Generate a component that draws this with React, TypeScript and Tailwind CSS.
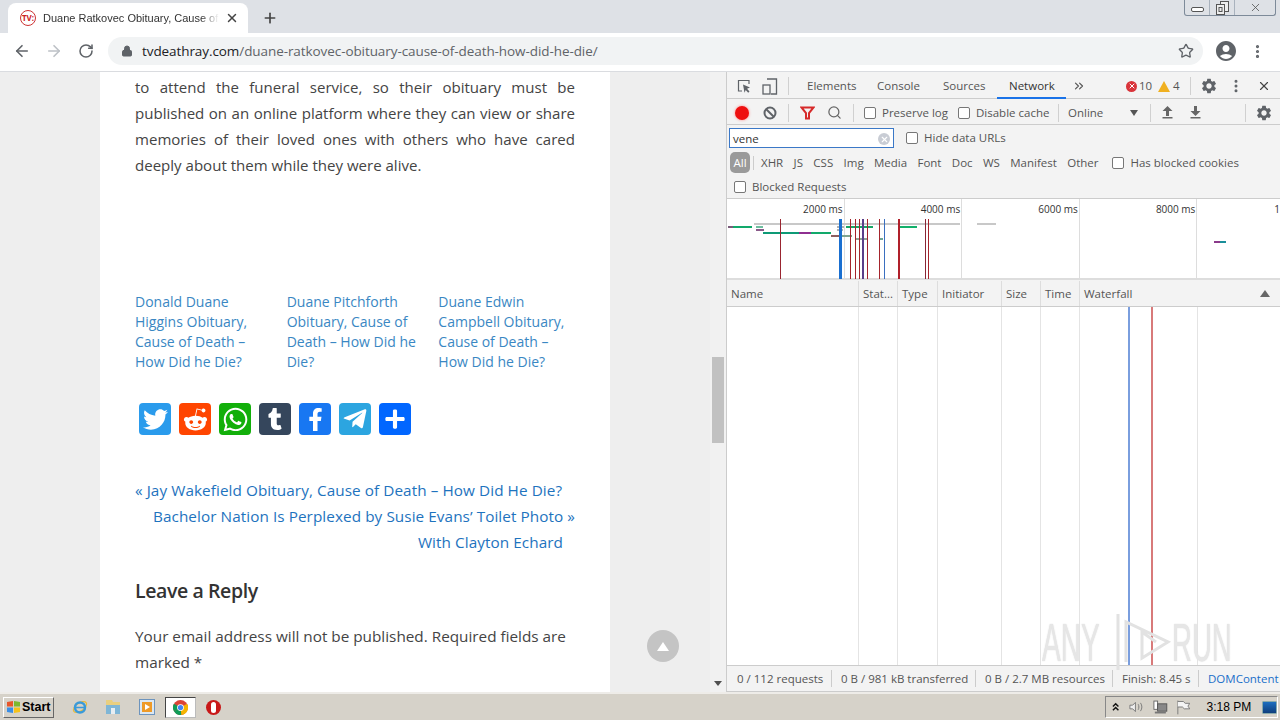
import { ArrowLeft, ArrowRight, RotateCw, Lock, Star, MoreVertical, X, Plus, Search, ChevronsRight } from "lucide-react";
import { FaTwitter, FaRedditAlien, FaWhatsapp, FaTumblr, FaFacebookF, FaTelegramPlane, FaPlus } from "react-icons/fa";
import { MdAccountCircle, MdSettings } from "react-icons/md";

const relatedLinks = [
  ["Donald Duane", "Higgins Obituary,", "Cause of Death –", "How Did he Die?"],
  ["Duane Pitchforth", "Obituary, Cause of", "Death – How Did he", "Die?"],
  ["Duane Edwin", "Campbell Obituary,", "Cause of Death –", "How Did he Die?"],
];

const shareButtons = [
  { bg: "bg-[#2a9bec]", icon: <FaTwitter size={25} /> },
  { bg: "bg-[#ff4500]", icon: <FaRedditAlien size={25} /> },
  { bg: "bg-[#12af0a]", icon: <FaWhatsapp size={27} /> },
  { bg: "bg-[#35465c]", icon: <FaTumblr size={22} /> },
  { bg: "bg-[#1877f2]", icon: <FaFacebookF size={23} /> },
  { bg: "bg-[#2ca5e0]", icon: <FaTelegramPlane size={26} /> },
  { bg: "bg-[#0166ff]", icon: <FaPlus size={22} /> },
];

const filterTypes = ["XHR", "JS", "CSS", "Img", "Media", "Font", "Doc", "WS", "Manifest", "Other"];

const columns = [
  { label: "Name", w: "w-[132px]" },
  { label: "Stat...", w: "w-[39px]" },
  { label: "Type", w: "w-[40px]" },
  { label: "Initiator", w: "w-[64px]" },
  { label: "Size", w: "w-[39px]" },
  { label: "Time", w: "w-[39px]" },
];

const overviewBars = [
  { x1: 754, x2: 960, y: 224, c: "#c8c8c8" },
  { x1: 977, x2: 996, y: 224, c: "#c8c8c8" },
  { x1: 728, x2: 733, y: 227, c: "#7a5a7a" },
  { x1: 733, x2: 752, y: 227, c: "#12a96b" },
  { x1: 756, x2: 763, y: 227, c: "#6fbfa0" },
  { x1: 756, x2: 764, y: 230, c: "#8a5a8a" },
  { x1: 763, x2: 799, y: 233, c: "#0e9a76" },
  { x1: 799, x2: 811, y: 233, c: "#8e2f90" },
  { x1: 811, x2: 831, y: 233, c: "#12a96b" },
  { x1: 831, x2: 839, y: 236, c: "#8d5f5f" },
  { x1: 839, x2: 852, y: 236, c: "#7fa58f" },
  { x1: 837, x2: 844, y: 227, c: "#b0b0b0" },
  { x1: 837, x2: 843, y: 230, c: "#b0b0b0" },
  { x1: 846, x2: 873, y: 227, c: "#16a765" },
  { x1: 855, x2: 867, y: 239, c: "#8fa596" },
  { x1: 880, x2: 883, y: 239, c: "#6fa596" },
  { x1: 900, x2: 917, y: 227, c: "#12b06a" },
  { x1: 1214, x2: 1220, y: 242, c: "#8a3a8a" },
  { x1: 1220, x2: 1226, y: 242, c: "#1a8f9a" },
];

const overviewLines = [
  { x: 780, c: "#9a2530", w: 1 },
  { x: 839, c: "#1a6fd0", w: 3 },
  { x: 850, c: "#a5242c", w: 1 },
  { x: 855, c: "#a5242c", w: 1 },
  { x: 859, c: "#a5242c", w: 1 },
  { x: 862, c: "#5a3f8a", w: 2 },
  { x: 867, c: "#a5242c", w: 1 },
  { x: 879, c: "#a5242c", w: 1 },
  { x: 884, c: "#3a6fc0", w: 1 },
  { x: 898, c: "#b0202a", w: 2 },
  { x: 925, c: "#8a2535", w: 1 },
  { x: 928, c: "#a5242c", w: 1 },
];

const Checkbox = () => (
  <span className="block w-[12px] h-[12px] shrink-0 rounded-[2px] border border-[#777] bg-white" />
);

const Divider = () => <span className="block w-px h-[18px] bg-[#d0d0d0] shrink-0" />;

const InspectIcon = () => (
  <svg width="16" height="16" viewBox="0 0 16 16" fill="none">
    <path d="M6 13H2.5V2.5H13V6" stroke="#5f6368" strokeWidth="1.2" />
    <path d="M7 6.5l7 3-3 1.2 2.5 2.8-1.3 1.2-2.5-2.8-1.2 2.8z" fill="#5f6368" />
  </svg>
);

const DeviceIcon = () => (
  <svg width="16" height="17" viewBox="0 0 16 17" fill="none">
    <path d="M5 1h9.5v15H9" stroke="#5f6368" strokeWidth="1.3" />
    <rect x="1" y="7" width="7" height="9" stroke="#5f6368" strokeWidth="1.3" />
  </svg>
);

const ArrowBar = ({ down = false }: { down?: boolean }) => (
  <svg width="13" height="13" viewBox="0 0 13 13" fill="#666">
    <path d={down ? "M5 0h3v5h3.5L6.5 10 1.5 5H5z" : "M6.5 0l5 5H8v5H5V5H1.5z"} />
    <rect x="1.5" y="11" width="10" height="1.5" />
  </svg>
);

const Chrome = ({ size = 15 }: { size?: number }) => (
  <svg width={size} height={size} viewBox="0 0 16 16">
    <circle cx="8" cy="8" r="8" fill="#db4437" />
    <path d="M8 8L1 12a8 8 0 0 1 0-8z" fill="#0f9d58" />
    <path d="M8 8l-7 4a8 8 0 0 0 8 4z" fill="#0f9d58" />
    <path d="M8 8l1 8a8 8 0 0 0 6-12z" fill="#f4b400" />
    <circle cx="8" cy="8" r="3.6" fill="#fff" />
    <circle cx="8" cy="8" r="2.8" fill="#4285f4" />
  </svg>
);

const TabBar = () => (
  <div className="h-[33px] bg-[#dee1e6] flex items-end shrink-0 relative">
    <div className="ml-2 w-[240px] h-[30px] bg-white rounded-t-lg flex items-center pl-3 pr-2">
      <span className="w-4 h-4 rounded-full border border-[#c33] flex items-center justify-center text-[8px] font-bold text-[#c22] shrink-0">
        TV:
      </span>
      <span className="ml-[7px] w-[176px] text-[11px] text-[#333] whitespace-nowrap font-['Liberation_Sans',sans-serif] [mask-image:linear-gradient(to_right,black_90%,transparent)]">
        Duane Ratkovec Obituary, Cause of
      </span>
      <X size={14} strokeWidth={2.5} className="ml-[6px] text-[#444] shrink-0" />
    </div>
    <Plus size={16} strokeWidth={2.5} className="ml-[14px] mb-[7px] text-[#444]" />
    {/* caption buttons of the Windows 7 frame */}
    <div className="absolute right-[4px] top-0 w-[92px] h-[16px] flex border border-t-0 border-[#7d8a99] rounded-b-[3px]">
      <div className="w-[25px] flex items-end justify-center pb-[3px] border-r border-[#a9b2bd]">
        <span className="w-[13px] h-[5px] border border-[#555] rounded-[2px] bg-white" />
      </div>
      <div className="w-[25px] flex items-center justify-center border-r border-[#a9b2bd]">
        <svg width="13" height="14" viewBox="0 0 13 14" fill="none" stroke="#555">
          <rect x="4.5" y="0.5" width="8" height="10" fill="#eee" />
          <rect x="0.5" y="3.5" width="8" height="10" fill="#eee" />
          <rect x="3" y="6.5" width="3" height="4" />
        </svg>
      </div>
      <div className="flex-1 flex items-center justify-center">
        <X size={13} strokeWidth={1.5} className="text-[#555]" />
      </div>
    </div>
  </div>
);

const AddressBar = () => (
  <div className="h-[39px] bg-white border-b border-[#dadce0] flex items-center shrink-0 pb-[2px]">
    <ArrowLeft size={18} strokeWidth={2.2} className="ml-[13px] text-[#5f6368]" />
    <ArrowRight size={18} strokeWidth={2.2} className="ml-[14px] text-[#bdc1c6]" />
    <RotateCw size={16} strokeWidth={2.3} className="ml-[15px] text-[#5f6368]" />
    <div className="ml-[14px] w-[1095px] h-[28px] rounded-full bg-[#f1f3f4] flex items-center pl-[13px] pr-[9px]">
      <Lock size={12} fill="#5f6368" className="text-[#5f6368] shrink-0" />
      <span className="ml-[9px] text-[13.5px] tracking-[-0.08px] text-[#5f6368] font-['Open_Sans',sans-serif] whitespace-nowrap">
        <span className="text-[#202124]">tvdeathray.com</span>/duane-ratkovec-obituary-cause-of-death-how-did-he-die/
      </span>
      <Star size={16} strokeWidth={2} className="ml-auto text-[#5f6368]" />
    </div>
    <MdAccountCircle size={24} className="ml-[11px] text-[#5f6368]" />
    <MoreVertical size={17} strokeWidth={2.5} className="ml-[11px] text-[#5f6368]" />
  </div>
);

const PageArticle = () => (
  <div className="flex-1 relative overflow-hidden bg-[#eeeeee] flex pl-[100px]">
    <div className="w-[510px] h-full bg-white px-[35px] pt-[2px] text-[#444] font-['Open_Sans',sans-serif] text-[15.3px] leading-[26px]">
      <p className="text-justify text-[15.05px]">
        to attend the funeral service, so their obituary must be published on an online platform where they can view or share memories of their loved ones with others who have cared deeply about them while they were alive.
      </p>
      <div className="mt-[114px] grid grid-cols-3 gap-[15px] text-[14px] leading-[20px] text-[#3a87c3]">
        {relatedLinks.map((lines) => (
          <div key={lines[0]} className="whitespace-nowrap">
            {lines.map((line) => (
              <div key={line}>{line}</div>
            ))}
          </div>
        ))}
      </div>
      <div className="mt-[31px] ml-[4px] flex gap-2">
        {shareButtons.map((b, i) => (
          <span key={i} className={`w-8 h-8 rounded-[4px] flex items-center justify-center text-white ${b.bg}`}>
            {b.icon}
          </span>
        ))}
      </div>
      <div className="mt-[42px] text-[#1e73be] whitespace-nowrap tracking-[0.07px]">
        <div>« Jay Wakefield Obituary, Cause of Death – How Did He Die?</div>
        <div className="text-right">Bachelor Nation Is Perplexed by Susie Evans’ Toilet Photo »</div>
        <div className="text-right pr-[12px]">With Clayton Echard</div>
      </div>
      <h3 className="mt-[21px] text-[19.5px] leading-[30px] font-semibold text-[#333] tracking-[-0.4px]">Leave a Reply</h3>
      <p className="mt-[17px]">Your email address will not be published. Required fields are marked *</p>
    </div>
    <div className="ml-auto w-[16px] h-full bg-[#f1f1f1] flex flex-col items-center">
      <div className="mt-[285px] w-[12px] h-[86px] bg-[#c1c1c1]" />
      <span className="mt-auto mb-[6px] w-0 h-0 border-x-[4px] border-x-transparent border-t-[5px] border-t-[#505050]" />
    </div>
    <span className="absolute left-[647px] top-[558px] w-8 h-8 rounded-full bg-[#c4c4c4] flex items-center justify-center">
      <span className="w-0 h-0 border-x-[6px] border-x-transparent border-b-[9px] border-b-white" />
    </span>
  </div>
);

const DevTabs = () => (
  <div className="h-[27px] border-b border-[#ccc] flex items-center shrink-0 relative pl-[9px] pt-[2px]">
    <InspectIcon />
    <span className="ml-[10px]"><DeviceIcon /></span>
    <span className="ml-[10px]"><Divider /></span>
    <span className="ml-[18px] w-[70px]">Elements</span>
    <span className="w-[66px]">Console</span>
    <span className="w-[66px]">Sources</span>
    <span className="w-[63px] text-[#333]">Network</span>
    <ChevronsRight size={14} className="text-[#555]" />
    <span className="ml-[40px] w-[11px] h-[11px] rounded-full bg-[#d9343a] flex items-center justify-center text-white">
      <X size={8} strokeWidth={3} />
    </span>
    <span className="ml-[2px] w-[13px]">10</span>
    <span className="ml-[6px] w-0 h-0 border-x-[6px] border-x-transparent border-b-[11px] border-b-[#f0b020]" />
    <span className="ml-[3px] w-[7px]">4</span>
    <span className="ml-[10px]"><Divider /></span>
    <MdSettings size={18} className="ml-[9px] text-[#5f6368]" />
    <MoreVertical size={16} strokeWidth={2.5} className="ml-[10px] text-[#5f6368]" />
    <X size={14} strokeWidth={2} className="ml-[13px] text-[#444]" />
    <span className="absolute left-[270px] bottom-[-1px] w-[69px] h-[2px] bg-[#1a73e8]" />
  </div>
);

const NetworkToolbar = () => (
  <div className="h-[26px] border-b border-[#ccc] flex items-center shrink-0 pl-[8px] pt-[2px]">
    <span className="w-[14px] h-[14px] rounded-full bg-[#ee1111] shadow-[0_0_3px_#f88]" />
    <svg className="ml-[14px]" width="14" height="14" viewBox="0 0 14 14" fill="none" stroke="#5f6368" strokeWidth="2">
      <circle cx="7" cy="7" r="5.5" />
      <path d="M3 3l8 8" />
    </svg>
    <span className="ml-[11px]"><Divider /></span>
    <svg className="ml-[11px]" width="15" height="14" viewBox="0 0 15 14" fill="none" stroke="#d62a2a" strokeWidth="2">
      <path d="M1.5 1.5h12L9 7v5.5H6V7z" />
    </svg>
    <Search size={15} strokeWidth={2} className="ml-[12px] text-[#666]" />
    <span className="ml-[11px]"><Divider /></span>
    <span className="ml-[10px]"><Checkbox /></span>
    <span className="ml-[6px] w-[65px] whitespace-nowrap">Preserve log</span>
    <span className="ml-[11px]"><Checkbox /></span>
    <span className="ml-[6px] w-[72px] whitespace-nowrap">Disable cache</span>
    <span className="ml-[10px]"><Divider /></span>
    <span className="ml-[9px] w-[62px]">Online</span>
    <span className="w-0 h-0 border-x-[4px] border-x-transparent border-t-[6px] border-t-[#555]" />
    <span className="ml-[12px]"><Divider /></span>
    <span className="ml-[10px]"><ArrowBar /></span>
    <span className="ml-[15px]"><ArrowBar down /></span>
    <span className="ml-[43px]"><Divider /></span>
    <MdSettings size={18} className="ml-[9px] text-[#5f6368]" />
  </div>
);

const FilterBar = () => (
  <div className="h-[74px] border-b border-[#ccc] shrink-0 pl-[2px] pt-[3px]">
    <div className="flex items-center h-[20px]">
      <div className="w-[165px] h-[20px] bg-white border border-[#3b78c7] flex items-center pl-[3px] pr-[3px] pt-[2px] text-[#333]">
        vene
        <span className="ml-auto w-[12px] h-[12px] rounded-full bg-[#c8ccd4] flex items-center justify-center text-white">
          <X size={9} strokeWidth={3} />
        </span>
      </div>
      <span className="ml-[12px]"><Checkbox /></span>
      <span className="ml-[6px]">Hide data URLs</span>
    </div>
    <div className="flex items-center h-[21px] mt-[4px]">
      <span className="ml-[1px] w-[20px] h-[21px] rounded-[5px] bg-[#9a9a9a] text-white flex items-center justify-center">All</span>
      <span className="ml-[3px] w-px h-[14px] bg-[#ccc]" />
      <div className="ml-[7px] flex gap-[10.35px]">
        {filterTypes.map((t) => (
          <span key={t}>{t}</span>
        ))}
      </div>
      <span className="ml-[14px]"><Checkbox /></span>
      <span className="ml-[6px]">Has blocked cookies</span>
    </div>
    <div className="flex items-center h-[14px] mt-[7px] pl-[5px]">
      <Checkbox />
      <span className="ml-[6px]">Blocked Requests</span>
    </div>
  </div>
);

const Overview = () => (
  <div className="h-[81px] shrink-0 relative flex bg-white border-b-2 border-[#ddd]">
    {["2000 ms", "4000 ms", "6000 ms", "8000 ms"].map((t) => (
      <div key={t} className="w-[117.6px] shrink-0 border-r border-[#ddd] text-right pr-[1px] text-[10px] leading-[20px] text-[#333]">
        {t}
      </div>
    ))}
    <div className="flex-1 text-right text-[10px] leading-[20px] text-[#333]">1</div>
    <svg className="absolute left-0 top-0" width="553" height="80" viewBox="727 199 553 80">
      {overviewBars.map((b, i) => (
        <rect key={i} x={b.x1} y={b.y - 1} width={b.x2 - b.x1} height={2} fill={b.c} />
      ))}
      {overviewLines.map((l) => (
        <rect key={l.x} x={l.x} y={219} width={l.w} height={60} fill={l.c} />
      ))}
    </svg>
  </div>
);

const RequestTable = () => (
  <div className="flex-1 flex flex-col relative min-h-0">
    <div className="h-[27px] shrink-0 flex bg-[#f3f3f3] border-b border-[#ccc] pt-[1px]">
      {columns.map((c) => (
        <div key={c.label} className={`${c.w} shrink-0 border-r border-[#ddd] pl-[4px] leading-[26px] whitespace-nowrap`}>
          {c.label}
        </div>
      ))}
      <div className="flex-1 pl-[4px] leading-[26px] flex items-center justify-between pr-[10px]">
        Waterfall
        <span className="w-0 h-0 border-x-[5px] border-x-transparent border-b-[7px] border-b-[#666]" />
      </div>
    </div>
    <div className="flex-1 flex bg-white">
      {columns.map((c) => (
        <div key={c.label} className={`${c.w} shrink-0 border-r border-[#e4e4e4]`} />
      ))}
      <div className="w-[118px] shrink-0 border-r border-[#e4e4e4]" />
    </div>
    <span className="absolute left-[401px] top-[27px] bottom-0 w-[2px] bg-[#7a9ede]" />
    <span className="absolute left-[424px] top-[27px] bottom-0 w-[2px] bg-[#d87a7a]" />
    {/* ANY.RUN watermark */}
    <div className="absolute left-[315px] top-[332px] h-[60px] flex items-center text-[54px] leading-[60px] text-[#e6e6e6] font-['Liberation_Sans',sans-serif] overflow-hidden [text-shadow:0_0_2px_#ddd]">
      <span className="w-[70px] scale-x-[0.52] origin-left">ANY</span>
      <svg width="60" height="60" viewBox="0 0 60 60" fill="none" stroke="#e2e2e2" strokeWidth="3">
        <path d="M6 58V2M14 50V10l42 20-26 16V20l14 10" />
      </svg>
      <span className="w-[60px] scale-x-[0.51] origin-left">RUN</span>
    </div>
  </div>
);

const StatusBar = () => (
  <div className="h-[27px] shrink-0 bg-[#f3f3f3] border-y border-[#ccc] flex items-center whitespace-nowrap overflow-hidden">
    <span className="pl-[10px] w-[105px] border-r border-[#ccc]">0 / 112 requests</span>
    <span className="pl-[9px] w-[144px] border-r border-[#ccc]">0 B / 981 kB transferred</span>
    <span className="pl-[9px] w-[137px] border-r border-[#ccc]">0 B / 2.7 MB resources</span>
    <span className="pl-[9px] w-[86px] border-r border-[#ccc]">Finish: 8.45 s</span>
    <span className="pl-[9px] text-[#1a6fc9]">DOMContent</span>
  </div>
);

const DevTools = () => (
  <div className="w-[554px] shrink-0 flex flex-col bg-[#f3f3f3] border-l border-[#ccc] text-[11.5px] text-[#555] font-['Open_Sans',sans-serif]">
    <DevTabs />
    <NetworkToolbar />
    <FilterBar />
    <Overview />
    <RequestTable />
    <StatusBar />
  </div>
);

const Taskbar = () => (
  <div className="h-[28px] shrink-0 bg-[#d6d2c9] border-t-2 border-[#eeece8] flex items-center pl-[3px] font-['Liberation_Sans',sans-serif]">
    <div className="w-[51px] h-[21px] border border-[#666] border-t-white border-l-white bg-[#d6d2c9] flex items-center pl-[2px] gap-[1px] font-bold text-[12.5px] text-black">
      <svg width="15" height="14" viewBox="0 0 15 14">
        <path d="M1 2l6-1v5.5H1z" fill="#e8562a" />
        <path d="M8 1l6 1v4.5H8z" fill="#7cb82f" />
        <path d="M1 7.5h6V13l-6-1z" fill="#3a8ee6" />
        <path d="M8 7.5h6V12l-6 1z" fill="#f5c21b" />
      </svg>
      Start
    </div>
    <svg className="ml-[18px]" width="16" height="16" viewBox="0 0 16 16" fill="none">
      <ellipse cx="8" cy="8" rx="7.5" ry="4" stroke="#e8b93a" strokeWidth="1.2" transform="rotate(-35 8 8)" />
      <circle cx="8" cy="8.5" r="5" stroke="#3a9ad9" strokeWidth="2.5" />
      <path d="M4 8.5h8" stroke="#3a9ad9" strokeWidth="1.5" />
    </svg>
    <svg className="ml-[17px]" width="16" height="16" viewBox="0 0 16 16">
      <path d="M1 1h6l1 2h7v5H1z" fill="#e9cf7f" />
      <rect x="1" y="6" width="14" height="9" fill="#7fb6d6" />
      <rect x="6" y="9" width="4" height="6" fill="#e8eef2" />
    </svg>
    <svg className="ml-[18px]" width="16" height="16" viewBox="0 0 16 16">
      <rect x="0.5" y="0.5" width="15" height="15" fill="#dbe7f2" stroke="#6d94bd" />
      <rect x="3" y="3" width="10" height="10" fill="#ee9a27" />
      <path d="M6 5l5 3-5 3z" fill="#fff" />
    </svg>
    <div className="ml-[10px] w-[31px] h-[21px] bg-white border border-[#444] border-r-[#bbb] border-b-[#bbb] flex items-center justify-center">
      <Chrome />
    </div>
    <span className="ml-[10px] w-[15px] h-[15px] rounded-full bg-[#c81818] flex items-center justify-center">
      <span className="w-[5px] h-[11px] rounded-full bg-white" />
    </span>
    <div className="ml-auto mr-[2px] w-[173px] h-[22px] border border-[#888] border-r-white border-b-white flex items-center pl-[6px] text-[12px] text-black">
      <svg width="8" height="10" viewBox="0 0 8 10" fill="none" stroke="#111" strokeWidth="1.6">
        <path d="M1 4.5l3-3 3 3M1 8.5l3-3 3 3" />
      </svg>
      <svg className="ml-[10px]" width="16" height="14" viewBox="0 0 16 14" fill="none" stroke="#777">
        <path d="M1 5h3l3-3v10l-3-3H1z" fill="#eee" />
        <path d="M10 4c1 2 1 4 0 6M12.5 2.5c2 3 2 6 0 9" />
      </svg>
      <svg className="ml-[9px]" width="16" height="15" viewBox="0 0 16 15">
        <rect x="1" y="0.5" width="4" height="9" fill="#fff" stroke="#666" />
        <rect x="5" y="3.5" width="10" height="8" fill="#888" stroke="#555" />
        <rect x="2" y="12" width="12" height="2" fill="#777" />
      </svg>
      <svg className="ml-[8px]" width="16" height="16" viewBox="0 0 16 16" fill="none" stroke="#777">
        <path d="M2 1v15" />
        <path d="M2 2h6l2 2h5l-2 3 2 3H9L7 8H2" fill="#f4f4f4" />
      </svg>
      <span className="ml-[16px] w-[45px] text-center whitespace-nowrap">3:18 PM</span>
      <span className="ml-[11px] w-[16px] h-[13px] bg-gradient-to-b from-[#1d6fc0] to-[#0f3f7d] border border-[#8aa] rounded-[1px]" />
    </div>
  </div>
);

export default function App() {
  return (
    <div className="w-[1280px] h-[720px] flex flex-col overflow-hidden bg-white">
      <TabBar />
      <AddressBar />
      <div className="flex-1 flex min-h-0">
        <PageArticle />
        <DevTools />
      </div>
      <Taskbar />
    </div>
  );
}
